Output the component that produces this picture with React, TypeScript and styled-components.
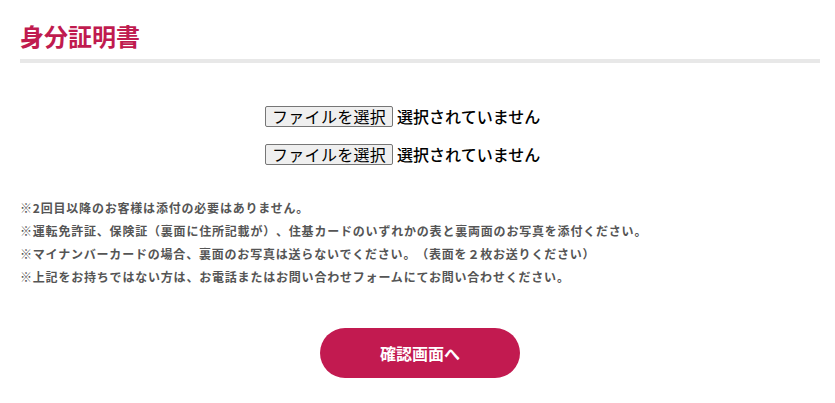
import React from "react";
import styled, { createGlobalStyle } from "styled-components";

const GlobalStyle = createGlobalStyle`
  html, body {
    margin: 0;
    padding: 0;
    background: #fff;
  }
  body {
    font-family: "Noto Sans CJK JP", "Noto Sans", sans-serif;
    text-spacing-trim: space-all;
  }
`;

const notes = [
  "※2回目以降のお客様は添付の必要はありません。",
  "※運転免許証、保険証（裏面に住所記載が）、住基カードのいずれかの表と裏両面のお写真を添付ください。",
  "※マイナンバーカードの場合、裏面のお写真は送らないでください。（表面を２枚お送りください）",
  "※上記をお持ちではない方は、お電話またはお問い合わせフォームにてお問い合わせください。",
];

const App = () => {
  return (
    <>
      <GlobalStyle />
      <StyledSection>
        <StyledTitle>身分証明書</StyledTitle>
        <StyledUploads>
          {[0, 1].map((i) => (
            <StyledFileRow key={i}>
              <StyledFileButton type="button">ファイルを選択</StyledFileButton>
              <StyledFileStatus>選択されていません</StyledFileStatus>
            </StyledFileRow>
          ))}
        </StyledUploads>
        <StyledNotes>
          {notes.map((note) => (
            <li key={note}>{note}</li>
          ))}
        </StyledNotes>
        <StyledActions>
          <StyledSubmit type="button">確認画面へ</StyledSubmit>
        </StyledActions>
      </StyledSection>
    </>
  );
};

const StyledSection = styled.section`
  width: 800px;
  padding: 19px 15px 0 20px;
`;

const StyledTitle = styled.h2`
  margin: 0;
  font-size: 24px;
  font-weight: 700;
  line-height: 34px;
  color: #c01b4f;
  padding-bottom: 6px;
  border-bottom: 4px solid #e8e8e8;
`;

const StyledUploads = styled.div`
  display: flex;
  flex-direction: column;
  align-items: center;
  gap: 16px;
  margin-top: 42px;
`;

const StyledFileRow = styled.div`
  display: flex;
  align-items: center;
  gap: 4px;
  width: 310px;
  height: 22px;
`;

const StyledFileButton = styled.button`
  flex: none;
  font-family: "Noto Sans CJK JP", sans-serif;
  font-size: 16px;
  line-height: 18px;
  letter-spacing: 0.3px;
  height: 21px;
  padding: 0 6px;
  color: #000;
  background: #efefef;
  border: 1px solid #767676;
  border-radius: 2px;
`;

const StyledFileStatus = styled.span`
  font-size: 16px;
  font-weight: 500;
  color: #000;
  white-space: nowrap;
`;

const StyledNotes = styled.ul`
  list-style: none;
  margin: 31px 0 0;
  padding: 0;
  font-size: 12px;
  font-weight: 700;
  letter-spacing: 0.8px;
  line-height: 23px;
  color: #555;
`;

const StyledActions = styled.div`
  display: flex;
  justify-content: center;
  margin-top: 40px;
`;

const StyledSubmit = styled.button`
  width: 200px;
  height: 50px;
  border: none;
  border-radius: 25px;
  background: #c21a50;
  color: #fff;
  font-family: "Noto Sans CJK JP", sans-serif;
  font-size: 16px;
  font-weight: 700;
  cursor: pointer;
`;

export default App;
